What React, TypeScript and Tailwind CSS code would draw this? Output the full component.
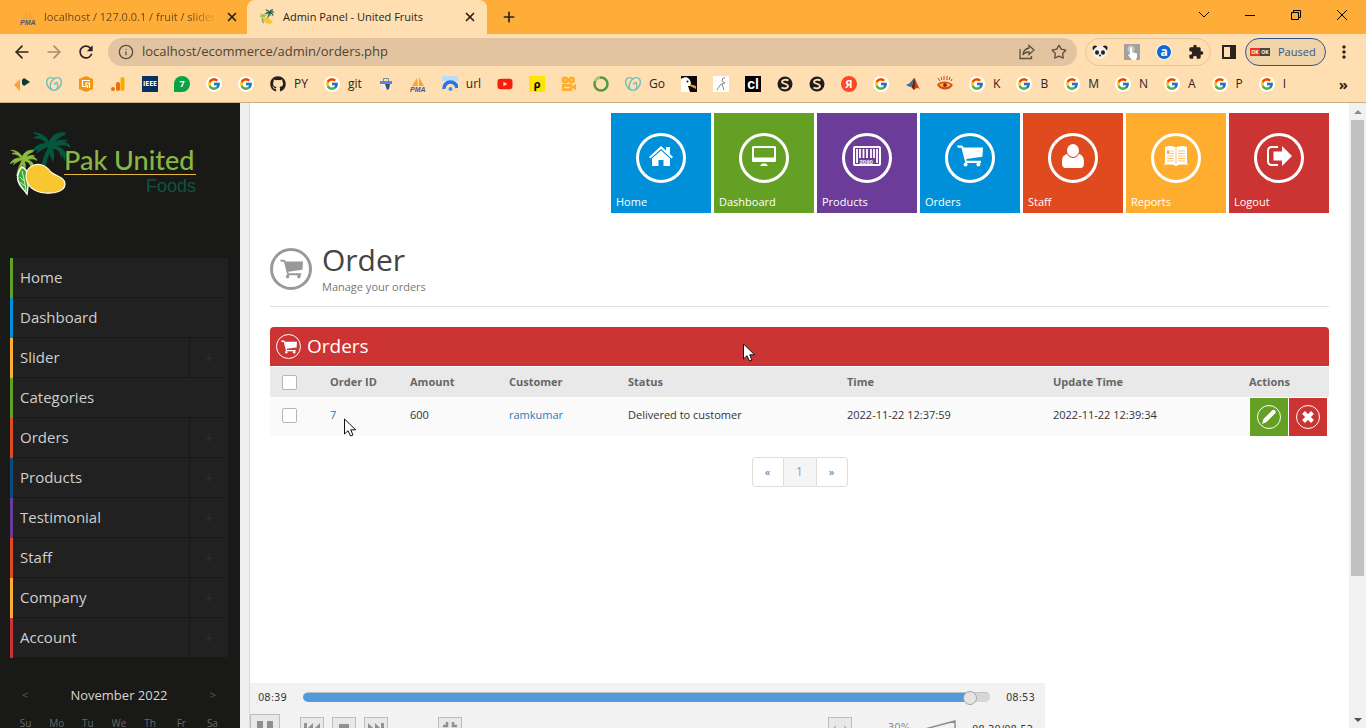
import type { ReactNode } from 'react';
import { FcGoogle } from 'react-icons/fc';
import { FaGithub, FaYoutube } from 'react-icons/fa';
import { SiGodaddy } from 'react-icons/si';
import { MdExtension, MdMoreVert, MdRefresh } from 'react-icons/md';
import { ArrowLeft, ArrowRight, Info, Plus, Star, X } from 'lucide-react';

function Cart({ className }: { className: string }) {
  return (
    <svg className={className} viewBox="0 0 26 22" fill="currentColor">
      <path d="M0 .5h5.2l1.4 2H26l-.6 9.3-16 2.2.3 1.7H24V18H8.4L4.4 2.7H1z" />
      <circle cx="8.600" cy="19.600" r="2" />
      <circle cx="21.400" cy="19.600" r="2" />
    </svg>
  );
}

function Palm({ x, y, size, color }: { x: number; y: number; size: number; color: string }) {
  return (
    <svg x={x} y={y} width={size} height={size} viewBox="0 0 40 40" fill={color} stroke={color} strokeWidth="1.2">
      <path d="M19 13C14 5 9 2 2 2c4 1 5 2 7 4-3-.5-5 0-6 1 7 0 10 3 14 7C11 12 4 15 0 22c3-2 6-3 8-3l-3 4c5-4 9-6 13-7l-2 7 3-2c0 4 1 7 3 10 1-5 1-9-1-13 5 0 9 3 10 9l2-3 1 6c3-7-1-12-9-14 5-2 11-2 15 1-1-3-4-5-7-6l3-1c-5-1-9 0-13 3 2-4 5-7 11-9l-3-1 4-1c-9-1-14 3-17 10z" />
      <path d="M18 17c-4 7-7 14-8 23h4c0-9 3-16 7-22z" />
    </svg>
  );
}

function FruitLogo({ className }: { className: string }) {
  return (
    <svg className={className} viewBox="0 0 60 66">
      <Palm x={22} y={0} size={38} color="#04583f" />
      <Palm x={0} y={18} size={27} color="#8bbb3f" />
      <path d="M12 36c-5 5-6 12-2 18 2 3 4 5 7 9 1-8 3-16-1-24z" fill="#3fa535" stroke="#fff" strokeWidth="1.4" />
      <path d="M12 40c2 7 3 13 4 20M10 46l4 4M10 51l5 4" fill="none" stroke="#d9efc8" />
      <path d="M24 34c7-2 13 2 17 7 4 4 14 5 14 12 0 7-10 10-20 9-12-1-19-8-19-17 0-5 3-9 8-11z" fill="#f8c630" stroke="#fffbe0" strokeWidth="1.2" />
    </svg>
  );
}

function Pma() {
  return (
    <svg className="size-4" viewBox="0 0 16 16">
      <path d="M2 10 7 2l1 8zM9 1l5 9H9z" fill="#f6a440" />
      <text x="0" y="15.500" fontSize="7" fontWeight="700" fontStyle="italic" fill="#4c5583" fontFamily="Liberation Sans">PMA</text>
    </svg>
  );
}

function Google() {
  return (
    <span className="flex size-4 items-center justify-center rounded-full bg-white">
      <FcGoogle className="size-3.5" />
    </span>
  );
}

function Globe() {
  return (
    <svg className="size-4" viewBox="0 0 16 16">
      <circle cx="8" cy="8" r="7.500" fill="#1f1d1a" />
      <path d="M11.500 4.500C9 3 5 4 5 6s6 1.500 6 4-4 3-6.500 1.500" fill="none" stroke="#ffdfb1" strokeWidth="1.800" />
    </svg>
  );
}

const godaddy = <SiGodaddy className="size-4 text-[#6cc0bf]" />;

const bookmarks: { icon: ReactNode; label?: string }[] = [
  {
    icon: (
      <svg className="size-4" viewBox="0 0 16 16">
        <path d="M0 9 6 3v12z" fill="#ff9f40" />
        <path d="M10 2v8L8 8V4zM10 2l6 4-6 4z" fill="#0c3a36" />
      </svg>
    ),
  },
  { icon: godaddy },
  {
    icon: (
      <svg className="size-4" viewBox="0 0 16 16">
        <path d="m8 0 7 3v10l-7 3-7-3V3z" fill="#f2960f" />
        <path d="M12 4.500H4.500v6H8V7h3.500v5M9.500 9v3" fill="none" stroke="#fff" strokeWidth="1.200" />
      </svg>
    ),
  },
  {
    icon: (
      <svg className="size-4" viewBox="0 0 16 16">
        <rect x="10.500" y="1" width="4" height="14" rx="2" fill="#f9ab00" />
        <rect x="6" y="6" width="4" height="9" rx="2" fill="#e8710a" />
        <circle cx="3" cy="13" r="2" fill="#e8710a" />
      </svg>
    ),
  },
  { icon: <span className="flex size-4 items-center justify-center bg-[#06305f] font-['Open_Sans',sans-serif] text-[7px] font-bold text-white">IEEE</span> },
  { icon: <span className="flex size-4 items-center justify-center rounded-full rounded-bl-sm bg-[#08a344] text-[9px] font-bold text-white">7</span> },
  { icon: <Google /> },
  { icon: <Google /> },
  { icon: <FaGithub className="size-4 text-[#24201c]" />, label: 'PY' },
  { icon: <Google />, label: 'git' },
  {
    icon: (
      <svg className="size-4" viewBox="0 0 16 16">
        <path d="M5.500 5V2.500h5V5" fill="none" stroke="#7a8594" />
        <path d="M2 5h12v3H2z" fill="#4f8cd8" />
        <path d="M3 8h10v6H3z" fill="#e8eaee" />
        <path d="M7 8h5l-1 5-2 1-1-3z" fill="#454e5c" />
      </svg>
    ),
  },
  { icon: <Pma /> },
  {
    icon: (
      <svg className="size-4" viewBox="0 0 16 16">
        <path d="M0 0h16v5H0z" fill="#b9dcfb" />
        <path d="M2 13a6.500 6.500 0 0 1 13-1" fill="none" stroke="#2276f0" strokeWidth="3.500" />
        <circle cx="8.500" cy="13" r="2" fill="#3e8cf4" />
      </svg>
    ),
    label: 'url',
  },
  { icon: <FaYoutube className="size-4 text-[#fb1b0c]" /> },
  { icon: <span className="flex size-4 items-center justify-center bg-[#fce500] text-[11px] font-bold text-black">ρ</span> },
  {
    icon: (
      <svg className="size-4" viewBox="0 0 16 16" fill="#ffad2e">
        <circle cx="4" cy="4" r="3.500" />
        <circle cx="10.500" cy="4" r="3.500" />
        <path d="M1 8h10v2l4-2v6l-4-2v3H1z" />
        <path d="M3 11.500h6M3.500 4h1M10 4h1" stroke="#ffdfb1" strokeWidth="1.500" />
      </svg>
    ),
  },
  {
    icon: (
      <svg className="size-4" viewBox="0 0 16 16" fill="none">
        <circle cx="8" cy="8" r="6.500" stroke="#4b9e38" strokeWidth="2.500" />
        <path d="M2 5a7 7 0 0 1 5-3" stroke="#b7cf8a" strokeWidth="2" />
      </svg>
    ),
  },
  { icon: godaddy, label: 'Go' },
  {
    icon: (
      <svg className="size-4" viewBox="0 0 16 16">
        <path d="M0 0h16v16H0z" fill="#0b0b0b" />
        <path d="M0 3c5-4 9-1 10 4l-1 3H7l2 6H0z" fill="#fff" />
        <path d="m9 8 6 2v3l-6-3z" fill="#f29a1d" />
        <circle cx="6.500" cy="5.500" r="1" fill="#111" />
      </svg>
    ),
  },
  {
    icon: (
      <svg className="size-4" viewBox="0 0 16 16">
        <path d="M0 0h16v16H0z" fill="#fff" />
        <path d="M10 2 9 5l3 2-4 1-4 6M9 8l2 6M10 2h2" fill="none" stroke="#8d8a86" />
      </svg>
    ),
  },
  { icon: <span className="flex size-4 items-center justify-center bg-black font-['Liberation_Sans',sans-serif] text-[14px] leading-4 font-bold text-white">cl</span> },
  { icon: <Globe /> },
  { icon: <Globe /> },
  { icon: <span className="flex size-4 items-center justify-center rounded-full bg-[#fb4a24] text-[11px] leading-4 font-bold text-white">Я</span> },
  { icon: <Google /> },
  {
    icon: (
      <svg className="size-4" viewBox="0 0 16 16">
        <path d="m1 9 4-2 4-5-2 8-2 1z" fill="#39709c" />
        <path d="M9 2c2 1 3 7 6 11-3-2-4-1-6 1l-3-3c2-2 2-6 3-9z" fill="#c5421c" />
        <path d="M9 2c1 3 1 7 0 12l-2-3z" fill="#5a2018" />
      </svg>
    ),
  },
  {
    icon: (
      <svg className="size-4" viewBox="0 0 16 16">
        <path d="m1 2 2 3M4 1l1 3M7 0v4M10 0v4M13 1l-1 3M15 3l-1 2" stroke="#c9432a" />
        <path d="M0 9c4-5 12-4 16 0-4 6-12 6-16 0z" fill="#cf4a1d" />
        <path d="M2 9c4-3 8-3 12 0-4 3-8 3-12 0z" fill="#ffbd38" />
        <circle cx="8" cy="9" r="2" fill="#8f2d14" />
      </svg>
    ),
  },
  { icon: <Google />, label: 'K' },
  { icon: <Google />, label: 'B' },
  { icon: <Google />, label: 'M' },
  { icon: <Google />, label: 'N' },
  { icon: <Google />, label: 'A' },
  { icon: <Google />, label: 'P' },
  { icon: <Google />, label: 'I' },
];

const menu = [
  { label: 'Home', color: 'border-[#64a023]', expandable: false },
  { label: 'Dashboard', color: 'border-[#0090d9]', expandable: false },
  { label: 'Slider', color: 'border-[#ffad33]', expandable: true },
  { label: 'Categories', color: 'border-[#64a023]', expandable: false },
  { label: 'Orders', color: 'border-[#e04a1f]', expandable: true },
  { label: 'Products', color: 'border-[#0a4a7c]', expandable: true },
  { label: 'Testimonial', color: 'border-[#6b3d98]', expandable: true },
  { label: 'Staff', color: 'border-[#e04a1f]', expandable: true },
  { label: 'Company', color: 'border-[#ffad33]', expandable: true },
  { label: 'Account', color: 'border-[#cc3433]', expandable: true },
];

const tiles = [
  {
    label: 'Home',
    color: 'bg-[#0090d9]',
    icon: (
      <svg className="h-5 w-6" viewBox="0 0 24 20">
        <path d="m12 0 5 4.500V1h4v7.300l3 2.800-1.300 1.300L12 3 1.300 12.400 0 11.100z" fill="#fff" />
        <path d="m12 4.600 9 8V20h-6.500v-6h-5v6H3v-7.400z" fill="#fff" />
      </svg>
    ),
  },
  {
    label: 'Dashboard',
    color: 'bg-[#64a023]',
    icon: (
      <svg className="h-5 w-6" viewBox="0 0 24 20" fill="#fff">
        <path d="M1.500 0h21A1.500 1.500 0 0 1 24 1.500v13a1.500 1.500 0 0 1-1.500 1.500h-21A1.500 1.500 0 0 1 0 14.500v-13A1.500 1.500 0 0 1 1.500 0zM2 2v9.500h20V2z" fillRule="evenodd" />
        <path d="M10 17.500h4l2 2.500H8z" />
      </svg>
    ),
  },
  {
    label: 'Products',
    color: 'bg-[#6b3d98]',
    icon: (
      <svg className="h-5 w-7" viewBox="0 0 28 20">
        <rect x="1" y="1" width="26" height="18" rx="1" fill="none" stroke="#fff" strokeWidth="2" />
        <path d="M4 3v14M7 3v9M10.500 3v9M14 3v9M18 3v9M21 3v9M24 3v14" stroke="#fff" strokeWidth="1.800" />
        <text x="6.500" y="17.500" fontSize="6" fontWeight="700" fill="#fff" fontFamily="Liberation Sans">2090</text>
      </svg>
    ),
  },
  { label: 'Orders', color: 'bg-[#0090d9]', icon: <Cart className="h-[22px] w-[26px]" /> },
  {
    label: 'Staff',
    color: 'bg-[#e04a1f]',
    icon: (
      <svg className="h-6 w-[22px]" viewBox="0 0 22 24" fill="#fff">
        <ellipse cx="11" cy="6.500" rx="6" ry="6.500" />
        <path d="M5 10c2 3 4 4 6 4s4-1 6-4c4 1 5 4 5 9 0 3-1 5-4 5H4c-3 0-4-2-4-5 0-5 1-8 5-9z" />
      </svg>
    ),
  },
  {
    label: 'Reports',
    color: 'bg-[#ffad2e]',
    icon: (
      <svg className="h-5 w-6" viewBox="0 0 24 20">
        <path d="M1 1c4-1.500 8-1 11 .500C15 0 19-.500 23 1v16l1 2c-4-.600-7-.600-10 0l-2 1-2-1c-3-.600-6-.600-10 0l1-2z" fill="#fff" />
        <path d="M12 2v16M6.500 5H10M6.500 7.500H10M3 10h7M3 12.500h7M3 15h7M14 5h7M14 7.500h7M14 10h7M14 12.500h7M14 15h7" stroke="#ffad2e" strokeWidth=".7" />
        <path d="M3 4.500h2.500v3.500H3z" fill="#ffad2e" />
      </svg>
    ),
  },
  {
    label: 'Logout',
    color: 'bg-[#cc3433]',
    icon: (
      <svg className="h-5 w-[25px]" viewBox="0 0 25 20">
        <path d="M11 1H4.500A3.500 3.500 0 0 0 1 4.500v11A3.500 3.500 0 0 0 4.500 19H11" fill="none" stroke="#fff" strokeWidth="2" />
        <path d="M15 0v5.500H6.500v9H15V20l10-10z" fill="#fff" />
      </svg>
    ),
  },
];

function Browser() {
  return (
    <header className="shrink-0 border-b border-[#c9ae8e] bg-[#ffdfb1] text-[#2b241c]">
      <div className="flex h-[34px] bg-[#ffad39] text-[11px]">
        <div className="flex w-[247px] items-center gap-2 pr-2 pl-5">
          <Pma />
          <span className="flex-1 overflow-hidden whitespace-nowrap text-[#6b4a1c] [mask-image:linear-gradient(to_right,#000_85%,transparent)]">localhost / 127.0.0.1 / fruit / slider</span>
          <button aria-label="Close tab"><X className="size-3.5" strokeWidth={3} /></button>
        </div>
        <div className="flex w-60 items-center gap-2 rounded-t-lg bg-[#ffdfb1] pr-2.5 pl-3">
          <FruitLogo className="size-4" />
          <span className="flex-1">Admin Panel - United Fruits</span>
          <button aria-label="Close tab"><X className="size-3.5" strokeWidth={3} /></button>
        </div>
        <button aria-label="New tab" className="px-3.5"><Plus className="size-4" strokeWidth={2.5} /></button>
        <div className="ml-auto flex items-center gap-[30px] pr-4 pb-1 text-black">
          <button aria-label="Search tabs">
            <svg className="size-4" viewBox="0 0 16 16" fill="none" stroke="currentColor"><path d="m3 5 5 5 5-5" /></svg>
          </button>
          <button aria-label="Minimize">
            <svg className="size-4" viewBox="0 0 16 16" stroke="currentColor"><path d="M3 8.500h10" /></svg>
          </button>
          <button aria-label="Restore">
            <svg className="size-4" viewBox="0 0 16 16" fill="none" stroke="currentColor"><path d="M3.500 5.500h7v7h-7zM5.500 5.500v-2h7v7h-2" /></svg>
          </button>
          <button aria-label="Close">
            <svg className="size-4" viewBox="0 0 16 16" stroke="currentColor"><path d="m3 3 10 10M13 3 3 13" /></svg>
          </button>
        </div>
      </div>

      <div className="flex h-9 items-center gap-2 px-3">
        <div className="flex items-center gap-3">
          <button aria-label="Back"><ArrowLeft className="size-5" strokeWidth={2} /></button>
          <button aria-label="Forward" className="text-[#a58c6d]"><ArrowRight className="size-5" strokeWidth={2} /></button>
          <button aria-label="Reload"><MdRefresh className="size-5" /></button>
        </div>
        <div className="ml-1 flex h-7 flex-1 items-center gap-2 rounded-full bg-[#e2c4a0] px-2.5 text-[#5d4f40]">
          <Info className="size-4" />
          <input aria-label="Address" className="flex-1 text-[13px] text-[#4f4335] outline-none" defaultValue="localhost/ecommerce/admin/orders.php" />
          <button aria-label="Share">
            <svg className="size-4" viewBox="0 0 16 16" fill="none" stroke="currentColor" strokeWidth="1.300"><path d="M1 5v9.500h11.500V12M10 1.500l5 4.500-5 4.500V8C7 8 5 9 4 11c0-4 2-6 6-7z" /></svg>
          </button>
          <button aria-label="Bookmark" className="ml-2"><Star className="size-4" /></button>
        </div>
        <div className="flex h-7 items-center gap-4 rounded-full border border-[#e6c698] px-1.5">
          <button aria-label="Panda">
            <svg className="size-4" viewBox="0 0 16 16">
              <circle cx="3" cy="4" r="2.500" fill="#222" />
              <circle cx="13" cy="4" r="2.500" fill="#222" />
              <ellipse cx="8" cy="8.500" rx="7" ry="6.500" fill="#f4f1ec" />
              <ellipse cx="5" cy="8.500" rx="2" ry="2.300" fill="#222" />
              <ellipse cx="11" cy="8.500" rx="2" ry="2.300" fill="#222" />
              <circle cx="8" cy="11.500" r="1" fill="#222" />
            </svg>
          </button>
          <button aria-label="Pointer">
            <svg className="size-4" viewBox="0 0 16 16">
              <rect width="16" height="16" rx="1" fill="#a4a19d" />
              <circle cx="7" cy="5" r="3.500" fill="#c9c7c4" />
              <path d="M6 4c0-1 2-1 2 0v4l5 1.500V13l-1 3H8l-4-5 1-1 1 1z" fill="#fff" />
            </svg>
          </button>
          <button aria-label="Account a" className="flex size-4 items-center justify-center rounded-full border border-white bg-[#0e69d3] text-[12px] leading-3 font-bold text-white">a</button>
          <button aria-label="Extensions"><MdExtension className="size-4" /></button>
        </div>
        <button aria-label="Side panel" className="ml-0.5">
          <svg className="size-4" viewBox="0 0 16 16"><path d="M1 1h14v14H1zM3 3v10h6V3z" fill="currentColor" fillRule="evenodd" /></svg>
        </button>
        <button className="flex h-7 w-[81px] items-center gap-2 rounded-full border border-[#35538c] bg-[#f1d3a8] px-1 text-[11px] text-[#35538c]">
          <span className="flex h-2 w-5 items-center text-center text-[5px] leading-2 font-bold text-white">
            <span className="w-1/2 bg-[#e2392b]">OK</span>
            <span className="w-1/2 bg-[#4a4444]">OK</span>
          </span>
          Paused
        </button>
        <button aria-label="Menu"><MdMoreVert className="size-5" /></button>
      </div>

      <nav className="flex h-8 items-center gap-4 px-3.5 pb-1 text-[12px]">
        {bookmarks.map((b, i) => (
          <a key={i} href="#" aria-label={b.label ?? 'Bookmark'} className="flex shrink-0 items-center gap-2">
            {b.icon}
            {b.label && <span>{b.label}</span>}
          </a>
        ))}
        <button aria-label="More bookmarks" className="ml-auto pr-1 text-[15px] leading-4 font-bold">»</button>
      </nav>
    </header>
  );
}

function Sidebar() {
  return (
    <aside className="w-60 shrink-0 overflow-hidden bg-[#191917] pr-3 pl-2.5">
      <a href="#" className="mt-7 mb-[61px] flex h-[66px]">
        <FruitLogo className="h-[66px] w-[60px] shrink-0" />
        <span className="-ml-1.5 flex w-[132px] shrink-0 flex-col whitespace-nowrap">
          <span className="mt-[15px] border-b border-[#e2b93a] font-[Lato,sans-serif] text-[27px] leading-7 font-medium text-[#8bb544]">Pak United</span>
          <span className="text-right font-['Liberation_Sans',sans-serif] text-[18px] leading-[22px] text-[#0b5640]">Foods</span>
        </span>
      </a>
      <ul className="text-[15px] text-[#cfcfcf]">
        {menu.map((m) => (
          <li key={m.label} className={`flex h-10 border-l-3 ${m.color}`}>
            <a href="#" className="flex flex-1 items-center border-b border-[#191919] bg-[#212121] pl-[7px]">{m.label}</a>
            {m.expandable && (
              <button aria-label={`Expand ${m.label}`} className="flex w-[39px] items-center justify-center border-b border-l border-[#191919] bg-[#212121] text-[#353535]">
                <Plus className="size-3" strokeWidth={1.5} />
              </button>
            )}
          </li>
        ))}
      </ul>
      <div className="mt-[27px] flex items-center justify-between px-3 text-[13px] leading-5 text-[#d5d5d5]">
        <button aria-label="Previous month" className="text-[11px] text-[#5c5c5c]">&lt;</button>
        <span>November 2022</span>
        <button aria-label="Next month" className="text-[11px] text-[#5c5c5c]">&gt;</button>
      </div>
      <div className="mt-2 grid grid-cols-7 text-center text-[10px] leading-5 text-[#6a6a6a]">
        {['Su', 'Mo', 'Tu', 'We', 'Th', 'Fr', 'Sa'].map((d) => (
          <span key={d}>{d}</span>
        ))}
      </div>
    </aside>
  );
}

function Pointer({ className }: { className: string }) {
  return (
    <svg className={className} viewBox="0 0 12 19">
      <path d="M.500 1v15l3.500-3.300L6.500 18l2.500-1-2.300-5.200h5z" fill="#fff" stroke="#111" />
    </svg>
  );
}

const checkbox = 'block size-[15px] appearance-none rounded-xs border border-[#b5b5b5] bg-white';

function OrdersTable() {
  return (
    <table className="w-full table-fixed text-left text-[11px] text-[#333]">
      <thead>
        <tr className="h-[31px] border-t border-b border-white bg-[#e9e9e9] text-[#666]">
          <th className="w-[60px] pl-3"><input type="checkbox" aria-label="Select all orders" className={checkbox} /></th>
          <th className="w-20">Order ID</th>
          <th className="w-[99px]">Amount</th>
          <th className="w-[119px]">Customer</th>
          <th className="w-[219px]">Status</th>
          <th className="w-[206px]">Time</th>
          <th className="w-[196px]">Update Time</th>
          <th className="w-20">Actions</th>
        </tr>
      </thead>
      <tbody>
        <tr className="h-[38px] bg-[#fafafa] *:pb-1">
          <td className="pl-3"><input type="checkbox" aria-label="Select order 7" className={checkbox} /></td>
          <td className="relative">
            <a href="#" className="text-[#1f7dbb]">7</a>
            <Pointer className="absolute top-5 left-3.5 h-[19px] w-3" />
          </td>
          <td>600</td>
          <td><a href="#" className="text-[#1f7dbb]">ramkumar</a></td>
          <td>Delivered to customer</td>
          <td>2022-11-22 12:37:59</td>
          <td>2022-11-22 12:39:34</td>
          <td className="pb-0!">
            <div className="flex gap-px pl-px text-white">
              <button aria-label="Edit order" className="flex size-[38px] items-center justify-center bg-[#64a023]">
                <svg className="size-6" viewBox="0 0 24 24">
                  <circle cx="12" cy="12" r="11.500" fill="none" stroke="#fff" />
                  <path d="m5 19 1.500-5L15 5.500c1-1 2-1 3 0s1 2 0 3L9.500 17z" fill="#fff" />
                </svg>
              </button>
              <button aria-label="Delete order" className="flex size-[38px] items-center justify-center bg-[#cc3433]">
                <svg className="size-6" viewBox="0 0 24 24">
                  <circle cx="12" cy="12" r="11.500" fill="none" stroke="#fff" />
                  <path d="m7.500 7.500 9 9M16.500 7.500l-9 9" stroke="#fff" strokeWidth="4" />
                </svg>
              </button>
            </div>
          </td>
        </tr>
      </tbody>
    </table>
  );
}

const playerButton = 'flex size-6 items-center justify-center border border-[#bdbdbd] bg-[#e8e8e8] text-[#909090]';

function Player() {
  return (
    <div className="absolute bottom-0 left-0 h-[45px] w-[795px] overflow-hidden bg-[#f2f2f2] font-['DejaVu_Sans',sans-serif] text-[10px] text-[#3b3b3b]">
      <div className="mb-[3px] flex h-7 items-center gap-4 px-2">
        <span className="w-[29px]">08:39</span>
        <input
          type="range"
          aria-label="Position"
          defaultValue={98}
          className="h-2.5 flex-1 appearance-none rounded-full border-t border-[#b9c3cc] bg-[linear-gradient(to_right,#5499da_97%,#d6d6d6_97%)] [&::-webkit-slider-thumb]:size-3.5 [&::-webkit-slider-thumb]:appearance-none [&::-webkit-slider-thumb]:rounded-full [&::-webkit-slider-thumb]:border [&::-webkit-slider-thumb]:border-[#a5a5a5] [&::-webkit-slider-thumb]:bg-[#e4e4e4]"
        />
        <span className="w-[31px]">08:53</span>
      </div>
      <div className="flex items-start">
        <button aria-label="Pause" className="flex size-[30px] items-center justify-center border border-[#bdbdbd] bg-[#e8e8e8] text-[#909090]">
          <svg className="size-4" viewBox="0 0 16 16" fill="currentColor"><path d="M0 0h6v16H0zM10 0h6v16h-6z" /></svg>
        </button>
        <div className="mt-[3px] ml-5 flex gap-2">
          <button aria-label="Previous" className={playerButton}>
            <svg className="h-3 w-4" viewBox="0 0 16 12" fill="currentColor"><path d="M0 0h3v12H0zM9 0v12L3 6zM16 0v12l-6-6z" /></svg>
          </button>
          <button aria-label="Stop" className={playerButton}><span className="size-2.5 bg-[#909090]" /></button>
          <button aria-label="Next" className={playerButton}>
            <svg className="h-3 w-4" viewBox="0 0 16 12" fill="currentColor"><path d="M13 0h3v12h-3zM0 0v12l6-6zM7 0v12l6-6z" /></svg>
          </button>
        </div>
        <button aria-label="Exit full screen" className={`mt-[3px] ml-[50px] ${playerButton}`}>
          <svg className="size-3.5" viewBox="0 0 14 14" fill="none" stroke="currentColor" strokeWidth="2.500"><path d="M0 4h4V0M10 0v4h4M0 10h4v4M10 14v-4h4" /></svg>
        </button>
        <button aria-label="Fit width" className={`mt-[3px] mr-9 ml-auto ${playerButton}`}>
          <svg className="size-4" viewBox="0 0 16 16" fill="none" stroke="currentColor"><path d="M1 8h14M4 5 1 8l3 3M12 5l3 3-3 3" /></svg>
        </button>
        <span className="mt-1.5 w-9 text-[#8d8d8d]">30%</span>
        <svg className="mt-1.5 h-5 w-8" viewBox="0 0 32 20" fill="none" stroke="#8d8d8d" strokeWidth="1.500"><path d="M1 9 31 1v18H1z" /></svg>
        <span className="mt-2 ml-4 w-[73px]">08:39/08:53</span>
      </div>
    </div>
  );
}

export default function App() {
  return (
    <div className="flex h-screen flex-col overflow-hidden font-['Open_Sans',sans-serif]">
      <Browser />
      <div className="flex min-h-0 flex-1">
        <Sidebar />
        <div className="w-2.5 shrink-0 border-r border-[#d9d9d9] bg-[#efefef]" />
        <main className="relative flex-1 bg-white px-5 pt-2.5">
          <nav className="flex justify-end gap-[3px]">
            {tiles.map((t) => (
              <a key={t.label} href="#" className={`flex size-[100px] flex-col items-center pt-5 text-white ${t.color}`}>
                <span className="flex size-[50px] items-center justify-center rounded-full border-3 border-white pb-1">{t.icon}</span>
                <span className="mt-[11px] w-full pl-[5px] text-[11px] leading-4">{t.label}</span>
              </a>
            ))}
          </nav>

          <div className="mt-7 flex gap-2.5 border-b border-[#dedede] pb-3">
            <span className="mt-[7px] flex size-[42px] items-center justify-center rounded-full border-3 border-[#999] text-[#999]">
              <Cart className="h-5 w-[23px]" />
            </span>
            <div>
              <h1 className="text-[30px] leading-[38px] text-[#444]">Order</h1>
              <p className="text-[11px] leading-[15px] text-[#777]">Manage your orders</p>
            </div>
          </div>

          <section className="relative mt-5">
            <h2 className="flex h-[39px] items-center gap-1.5 rounded-t bg-[#cc3433] px-1.5 text-[19px] text-white">
              <span className="flex size-[25px] items-center justify-center rounded-full border border-white">
                <Cart className="h-3.5 w-4" />
              </span>
              Orders
            </h2>
            <OrdersTable />
            <Pointer className="absolute top-4 left-[473px] h-[19px] w-3" />
          </section>

          <nav className="mt-[21px] flex justify-center text-[11px] text-[#337ab7]">
            <a href="#" aria-label="Previous page" className="flex h-[30px] w-8 items-center justify-center rounded-l border border-[#ddd]">«</a>
            <a href="#" className="flex h-[30px] w-8 items-center justify-center border-y border-[#ddd] bg-[#f5f5f5] text-[12px] text-[#999]">1</a>
            <a href="#" aria-label="Next page" className="flex h-[30px] w-8 items-center justify-center rounded-r border border-[#ddd]">»</a>
          </nav>

          <Player />
        </main>
        <div className="flex w-[17px] shrink-0 flex-col items-center bg-[#f1f1f1]">
          <svg className="h-[17px] w-2" viewBox="0 0 8 17"><path d="m0 11 4-4 4 4z" fill="#8b8b8b" /></svg>
          <div className="mb-auto h-[73%] w-[13px] bg-[#c1c1c1]" />
          <svg className="h-[17px] w-2" viewBox="0 0 8 17"><path d="m0 7 4 4 4-4z" fill="#505050" /></svg>
        </div>
      </div>
    </div>
  );
}
